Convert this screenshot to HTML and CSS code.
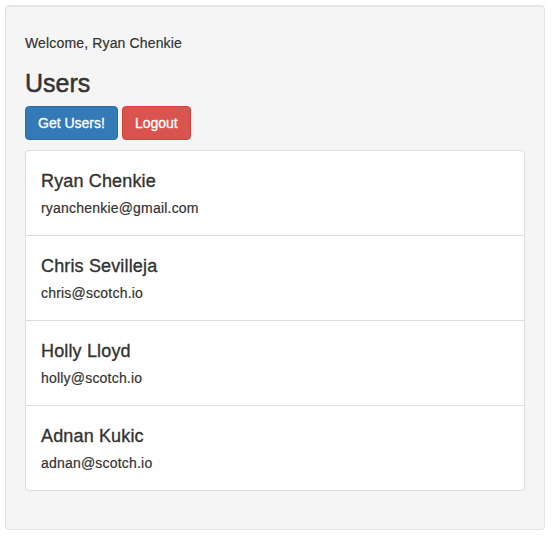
FILE: index.html
```html
<!DOCTYPE html>
<html lang="en">
<head>
<meta charset="utf-8">
<title>Users</title>
<link rel="stylesheet" href="styles.css">
</head>
<body>
<div class="well">
  <p class="welcome">Welcome, Ryan Chenkie</p>
  <h2 class="title">Users</h2>
  <div class="actions">
    <button class="btn btn-primary">Get Users!</button>
    <button class="btn btn-danger">Logout</button>
  </div>
  <ul class="list-group">
    <li class="list-item">
      <h4 class="name">Ryan Chenkie</h4>
      <p class="email">ryanchenkie@gmail.com</p>
    </li>
    <li class="list-item">
      <h4 class="name">Chris Sevilleja</h4>
      <p class="email">chris@scotch.io</p>
    </li>
    <li class="list-item">
      <h4 class="name">Holly Lloyd</h4>
      <p class="email">holly@scotch.io</p>
    </li>
    <li class="list-item">
      <h4 class="name">Adnan Kukic</h4>
      <p class="email">adnan@scotch.io</p>
    </li>
  </ul>
</div>
</body>
</html>
```

FILE: styles.css
```css
* { box-sizing: border-box; }
html, body { margin: 0; padding: 0; background: #fff; }
body {
  font-family: "Liberation Sans", Arial, Helvetica, sans-serif;
  font-size: 14px;
  line-height: 20px;
  color: #333;
  -webkit-text-stroke: 0.2px currentColor;
}
.well {
  width: 540px;
  margin: 5px 6px 5px 5px;
  padding: 19px 19px 18px 19px;
  background: #f5f5f5;
  border: 1px solid #e3e3e3;
  border-radius: 4px;
  box-shadow: inset 0 1px 1px rgba(0,0,0,.05);
}
.welcome {
  margin: 8px 0 0;
  font-size: 14px;
  line-height: 20px;
  letter-spacing: 0.15px;
}
.title {
  margin: 15px 0 8px;
  font-size: 25px;
  line-height: 30px;
  font-weight: 500;
  -webkit-text-stroke: 0.5px currentColor;
}
.actions {
  display: flex;
  gap: 4px;
}
.btn {
  font-family: inherit;
  font-size: 14px;
  line-height: 20px;
  padding: 6px 12px;
  border: 1px solid transparent;
  border-radius: 4px;
  color: #fff;
  cursor: pointer;
  -webkit-text-stroke: 0.3px currentColor;
}
.btn-primary { background: #337ab7; border-color: #2e6da4; }
.btn-danger { background: #d9534f; border-color: #d43f3a; }
.list-group {
  list-style: none;
  margin: 10px 0 20px;
  padding: 0;
  background: #fff;
  border: 1px solid #ddd;
  border-radius: 4px;
}
.list-item {
  padding: 20px 15px 17px;
  border-top: 1px solid #ddd;
}
.list-item:first-child { border-top: 0; }
.name {
  margin: 0 0 7px;
  font-size: 18px;
  line-height: 20px;
  font-weight: 500;
  letter-spacing: 0.15px;
  -webkit-text-stroke: 0.35px currentColor;
}
.email {
  margin: 0;
  font-size: 14px;
  line-height: 20px;
  letter-spacing: 0.2px;
}
```
